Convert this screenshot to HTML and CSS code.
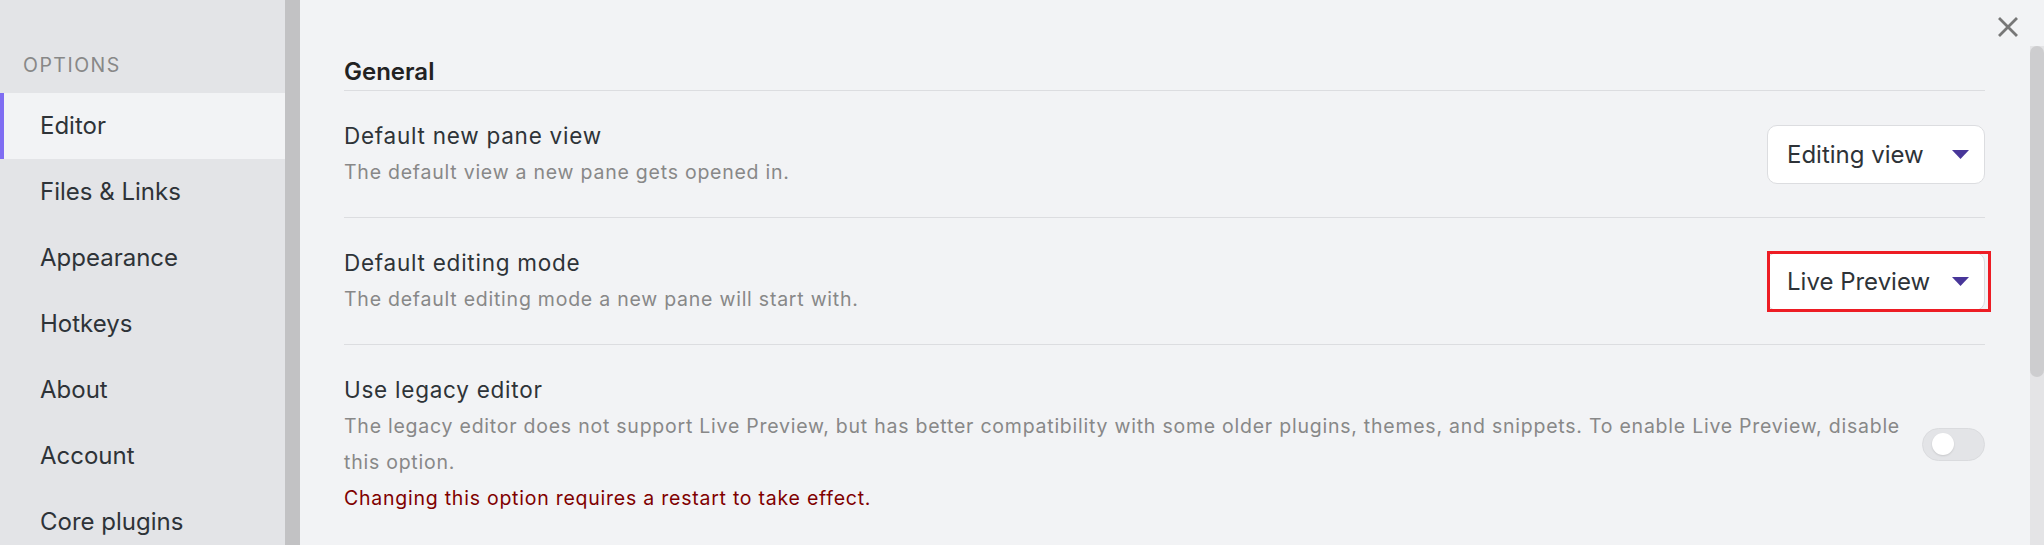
FILE: index.html
```html
<!DOCTYPE html>
<html lang="en">
<head>
<meta charset="utf-8">
<title>Settings</title>
<link rel="stylesheet" href="styles.css">
</head>
<body>
<div class="app">
  <nav class="sidebar">
    <div class="group-title">Options</div>
    <div class="nav-item is-active">Editor</div>
    <div class="nav-item">Files &amp; Links</div>
    <div class="nav-item">Appearance</div>
    <div class="nav-item">Hotkeys</div>
    <div class="nav-item">About</div>
    <div class="nav-item">Account</div>
    <div class="nav-item">Core plugins</div>
  </nav>
  <div class="sidebar-gutter"></div>
  <main class="content">
    <button class="close-button" aria-label="Close">
      <svg width="20" height="20" viewBox="0 0 20 20"><path d="M2 2 L18 18 M18 2 L2 18" stroke="#777" stroke-width="2.8" stroke-linecap="square" fill="none"/></svg>
    </button>
    <div class="settings">
      <div class="heading">General</div>

      <div class="setting-item first">
        <div class="info">
          <div class="name">Default new pane view</div>
          <div class="desc">The default view a new pane gets opened in.</div>
        </div>
        <div class="control">
          <div class="dropdown">
            <span class="dropdown-label">Editing view</span>
            <svg class="caret" width="17" height="9" viewBox="0 0 17 9"><path d="M0 0 H17 L8.5 9 Z" fill="#483699"/></svg>
          </div>
        </div>
      </div>

      <div class="setting-item">
        <div class="info">
          <div class="name">Default editing mode</div>
          <div class="desc">The default editing mode a new pane will start with.</div>
        </div>
        <div class="control">
          <div class="dropdown highlighted">
            <span class="dropdown-label">Live Preview</span>
            <svg class="caret" width="17" height="9" viewBox="0 0 17 9"><path d="M0 0 H17 L8.5 9 Z" fill="#483699"/></svg>
            <span class="annotation"></span>
          </div>
        </div>
      </div>

      <div class="setting-item">
        <div class="info">
          <div class="name">Use legacy editor</div>
          <div class="desc">The legacy editor does not support Live Preview, but has better compatibility with some older plugins, themes, and snippets. To enable Live Preview, disable this option.</div>
          <div class="warning">Changing this option requires a restart to take effect.</div>
        </div>
        <div class="control">
          <div class="toggle"><span class="knob"></span></div>
        </div>
      </div>
    </div>
    <div class="scrollbar"><div class="thumb"></div></div>
  </main>
</div>
</body>
</html>
```

FILE: styles.css
```css
html, body {
  margin: 0;
  padding: 0;
  height: 545px;
  overflow: hidden;
}

body {
  font-family: Inter, "Noto Sans", sans-serif;
  color: #2e3338;
  background: #f2f3f5;
}

.app {
  display: flex;
  height: 545px;
}

/* Sidebar */
.sidebar {
  width: 285px;
  flex-shrink: 0;
  background: #e3e4e7;
  padding-top: 50px;
  box-sizing: border-box;
}

.group-title {
  font-size: 19.5px;
  line-height: 30px;
  letter-spacing: 1.5px;
  text-transform: uppercase;
  color: #888888;
  padding-left: 23px;
  margin-bottom: 13px;
}

.nav-item {
  height: 66px;
  line-height: 66px;
  font-size: 24px;
  padding-left: 40px;
  color: #2e3338;
  white-space: nowrap;
}

.nav-item.is-active {
  background: #f2f3f5;
  box-shadow: inset 4px 0 0 #7f6df2;
}

.sidebar-gutter {
  width: 15px;
  flex-shrink: 0;
  background: #c2c2c4;
}

/* Main */
.content {
  flex: 1;
  display: flex;
  position: relative;
  background: #f2f3f5;
}

.close-button {
  position: absolute;
  top: 17px;
  right: 26px;
  width: 20px;
  height: 20px;
  padding: 0;
  border: 0;
  background: transparent;
  display: flex;
}

.settings {
  flex: 1;
  padding: 52px 45px 0 44px;
}

.heading {
  font-size: 24px;
  font-weight: 600;
  line-height: 36px;
  padding-top: 2px;
  border-bottom: 1px solid #dcdde0;
  color: #222222;
}

.setting-item {
  display: flex;
  align-items: center;
  padding: 27px 0;
  border-top: 1px solid #dcdde0;
}

.setting-item.first {
  border-top: 0;
}

.info {
  flex: 1 1 auto;
  margin-right: 20px;
  line-height: 36px;
}

.name {
  font-size: 22.5px;
  letter-spacing: 0.75px;
  color: #2e3338;
}

.desc {
  font-size: 19.5px;
  letter-spacing: 0.76px;
  color: #888888;
}

.warning {
  font-size: 19.5px;
  letter-spacing: 0.76px;
  color: #800000;
}

.control {
  flex-shrink: 0;
  display: flex;
  justify-content: flex-end;
}

.dropdown {
  position: relative;
  width: 218px;
  height: 59px;
  box-sizing: border-box;
  background: #ffffff;
  border: 1px solid #dcdde0;
  border-radius: 10px;
  display: flex;
  align-items: center;
  justify-content: space-between;
  padding: 0 15px 0 19px;
  font-size: 24px;
  color: #2e3338;
}

.caret {
  display: block;
  margin-top: 1px;
}

.annotation {
  position: absolute;
  top: -2px;
  left: -1px;
  right: -7px;
  bottom: -2px;
  border: 3px solid #ed1c24;
}

.toggle {
  width: 63px;
  height: 33px;
  box-sizing: border-box;
  border-radius: 17px;
  background: #e3e4e7;
  border: 1px solid #dadbde;
  display: flex;
  align-items: center;
  padding-left: 9px;
}

.knob {
  width: 22px;
  height: 22px;
  border-radius: 50%;
  background: #ffffff;
  box-shadow: 0 1px 2px rgba(0, 0, 0, 0.12);
}

.scrollbar {
  width: 14px;
  flex-shrink: 0;
  margin-top: 46px;
  background: #e4e4e6;
}

.thumb {
  height: 331px;
  border-radius: 7px;
  background: #cdcdcf;
}
```
